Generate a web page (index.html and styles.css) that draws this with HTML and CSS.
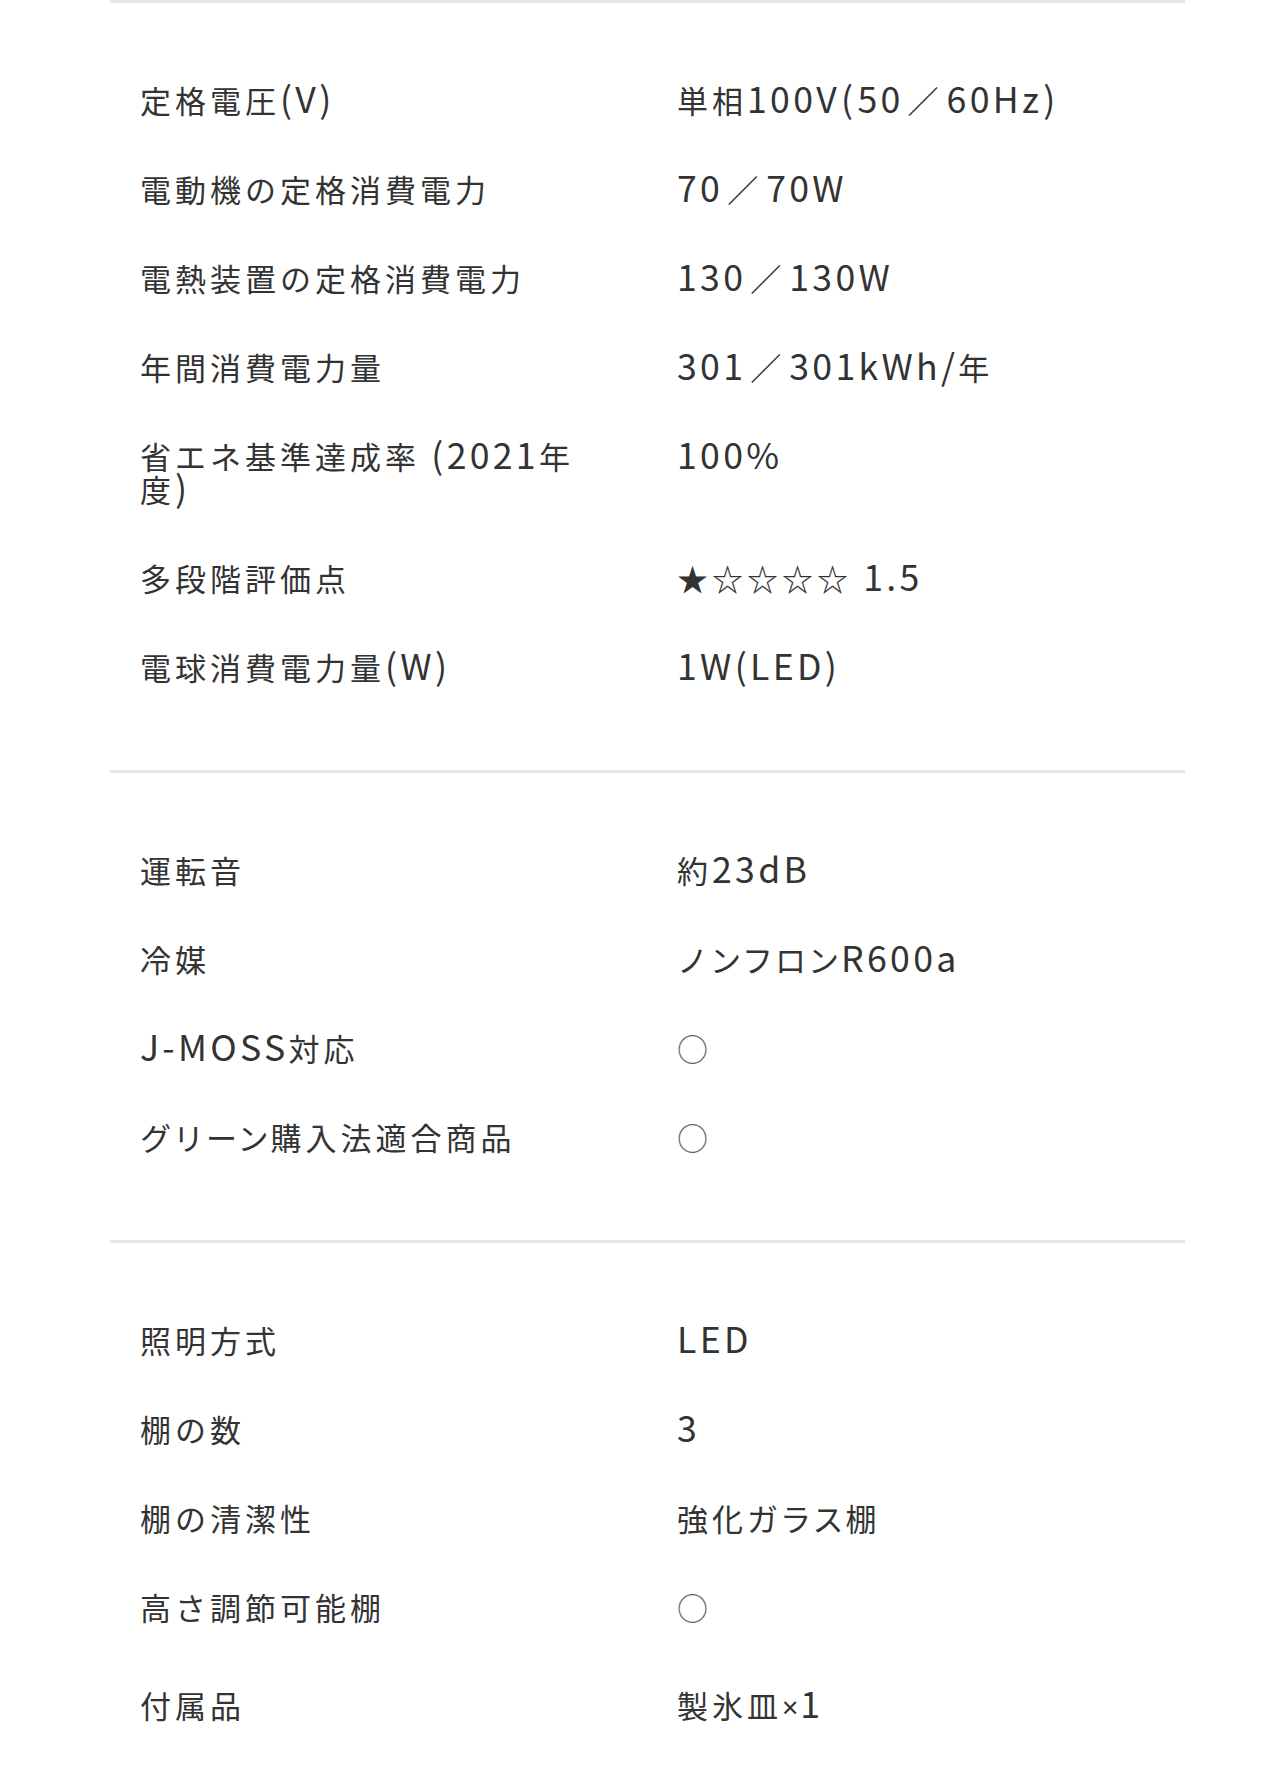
FILE: index.html
```html
<!DOCTYPE html>
<html lang="ja">
<head>
<meta charset="utf-8">
<title>仕様</title>
<link rel="stylesheet" href="styles.css">
</head>
<body>
<div class="spec">
  <dl class="group">
    <div class="row"><dt>定格電圧<span class="en">(V)</span></dt><dd>単相<span class="en">100V<span class="par">(</span>50</span><span class="sl">／</span><span class="en">60Hz<span class="par">)</span></span></dd></div>
    <div class="row"><dt>電動機の定格消費電力</dt><dd><span class="en">70</span><span class="sl">／</span><span class="en">70W</span></dd></div>
    <div class="row"><dt>電熱装置の定格消費電力</dt><dd><span class="en">130</span><span class="sl">／</span><span class="en">130W</span></dd></div>
    <div class="row"><dt>年間消費電力量</dt><dd><span class="en">301</span><span class="sl">／</span><span class="en">301kWh/</span>年</dd></div>
    <div class="row"><dt>省エネ基準達成率<span class="en"> (2021</span>年度<span class="en">)</span></dt><dd><span class="en">100%</span></dd></div>
    <div class="row"><dt>多段階評価点</dt><dd>★☆☆☆☆<span class="en"> 1.5</span></dd></div>
    <div class="row"><dt>電球消費電力量<span class="en">(W)</span></dt><dd><span class="en">1W(LED)</span></dd></div>
  </dl>
  <dl class="group">
    <div class="row"><dt>運転音</dt><dd>約<span class="en">23dB</span></dd></div>
    <div class="row"><dt>冷媒</dt><dd><span class="kana">ノンフロン</span><span class="en">R600a</span></dd></div>
    <div class="row"><dt><span class="en">J-MOSS</span>対応</dt><dd class="mark">○</dd></div>
    <div class="row"><dt><span class="kana">グリーン</span>購入法適合商品</dt><dd class="mark">○</dd></div>
  </dl>
  <dl class="group">
    <div class="row"><dt>照明方式</dt><dd><span class="en">LED</span></dd></div>
    <div class="row"><dt>棚の数</dt><dd><span class="en">3</span></dd></div>
    <div class="row"><dt>棚の清潔性</dt><dd>強化<span class="kana">ガラス</span>棚</dd></div>
    <div class="row"><dt>高さ調節可能棚</dt><dd class="mark">○</dd></div>
    <div class="row row-extra"><dt>付属品</dt><dd>製氷皿<span class="en"><span class="times">×</span>1</span></dd></div>
  </dl>
</div>
</body>
</html>
```
FILE: styles.css
```css
html, body {
  margin: 0;
  padding: 0;
  background: #ffffff;
}
body {
  font-family: "Noto Sans CJK JP", "Noto Sans", sans-serif;
  color: #333333;
}
.spec {
  margin-left: 110px;
  width: 1075px;
}
.group {
  margin: 0;
  border-top: 3px solid #e6e6e6;
  padding: 52px 0 59px;
}
.row {
  display: flex;
  padding: 28px 30px;
  font-size: 31px;
  line-height: 33px;
  letter-spacing: 4px;
  font-weight: 400;
}
.row-extra {
  padding-top: 37px;
}
dt {
  width: 457px;
  padding-right: 80px;
  margin: 0;
  flex: none;
}
dd {
  margin: 0;
  flex: 1;
}
.en {
  font-size: 1.15em;
  line-height: 20px;
  letter-spacing: 3.3px;
}
.par {
  padding: 0 1px;
}
.sl {
  padding: 0 4px;
}
.times {
  font-family: "Noto Sans", "DejaVu Sans", sans-serif;
  font-size: 0.8em;
  letter-spacing: 2px;
}
.kana {
  letter-spacing: 2px;
}
.mark {
  color: #666666;
}
```
